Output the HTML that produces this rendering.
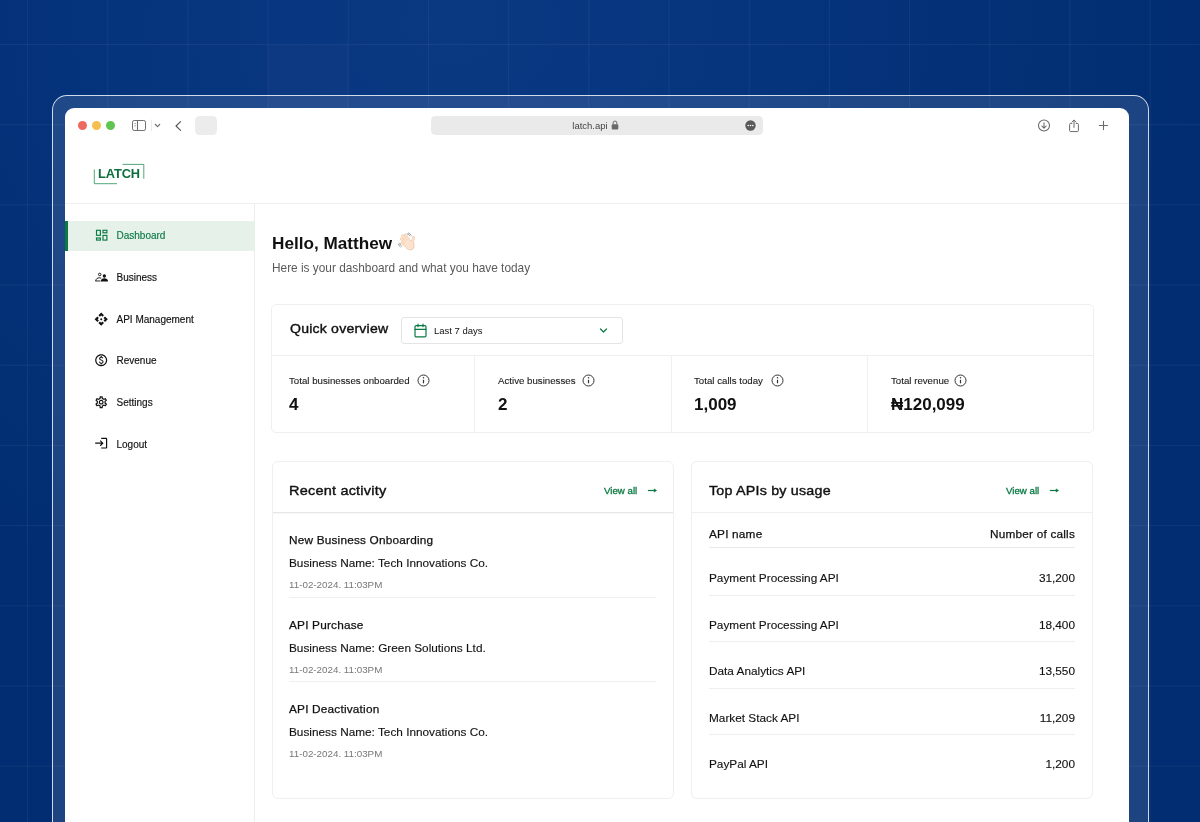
<!DOCTYPE html>
<html lang="en">
<head>
<meta charset="utf-8">
<title>Latch Dashboard</title>
<style>
*{box-sizing:border-box;margin:0;padding:0}
html,body{width:1200px;height:822px;overflow:hidden}
body{font-family:"Liberation Sans",Arial,Helvetica,sans-serif;color:#111;position:relative;
background:#022d72 radial-gradient(ellipse 62% 76% at 37.5% 3%,#0a3881 0%,#083680 22%,#05347c 46%,#043077 68%,#022e73 92%,#022d72 100%);}
.grid{position:absolute;left:0;top:0;width:1200px;height:822px;
background-image:linear-gradient(to right,rgba(255,255,255,.05) 1px,transparent 1px),linear-gradient(to bottom,rgba(255,255,255,.05) 1px,transparent 1px);
background-size:80.2px 80.2px;background-position:27px 44px;}
.cell{position:absolute;left:268px;top:45px;width:80px;height:80px;background:rgba(255,255,255,.018)}
.frame{position:absolute;left:52px;top:95px;width:1097px;height:760px;border:1px solid rgba(255,255,255,.8);border-radius:15px;background:rgba(255,255,255,.11);}
.win{will-change:transform;position:absolute;left:65px;top:108px;width:1064px;height:740px;background:#fff;border-radius:9px 9px 0 0;overflow:hidden;}
.abs{position:absolute}
.tl{position:absolute;top:13px;width:9px;height:9px;border-radius:50%}
.hdrline{position:absolute;left:0;top:95px;width:1064px;height:1px;background:#eef0ef}
.side{position:absolute;left:0;top:96px;width:190px;height:700px;border-right:1px solid #e9f0ec}
.nav{position:absolute;left:0;width:189px;height:30px;font-size:10px;color:#111;}
.nav span{-webkit-text-stroke:.15px currentColor;position:absolute;left:51.5px;top:9px;line-height:12px;white-space:nowrap}
.nav svg{position:absolute;left:29.1px;top:7px;width:14.4px;height:14.4px}
.nav.on{color:#0b7a43}
.navbg{position:absolute;left:0;top:113px;width:189.5px;height:29.6px;background:#e6f1ea}
.navbg:before{content:"";position:absolute;left:0;top:0;width:3.4px;height:29.6px;background:#0a7a42}
.card{position:absolute;background:#fff;border:1px solid #eeefef;border-radius:6px}
.t{position:absolute;white-space:nowrap;line-height:1}
.h2{font-size:13.6px;color:#111;letter-spacing:.2px;-webkit-text-stroke:.4px #111;transform:scaleX(1.05);transform-origin:0 50%}
.lbl{font-size:9.7px;color:#1c1c1c;-webkit-text-stroke:.12px #1c1c1c}
.val{font-size:17px;font-weight:700;color:#111}
.green{color:#0a7a42;-webkit-text-stroke:.3px #0a7a42}
.ln{position:absolute;height:1px;background:#efefef}
.vl{position:absolute;width:1px;background:#f0f0f0}
.m{font-size:11.8px;color:#111;-webkit-text-stroke:.12px #111}
.ms{-webkit-text-stroke:.25px #111;letter-spacing:.2px}
.d{font-size:9.8px;color:#777}
.r{text-align:right}
</style>
</head>
<body>
<div class="grid"></div><div class="cell"></div>
<div class="frame"></div>
<div class="win">
  <!-- browser chrome -->
  <div class="tl" style="left:13.3px;background:#ec6a5e"></div>
  <div class="tl" style="left:27.2px;background:#f4bf4f"></div>
  <div class="tl" style="left:40.8px;background:#61c554"></div>
  <svg class="abs" style="left:66px;top:11px" width="30" height="14" viewBox="0 0 30 14" fill="none" stroke="#707070" stroke-width="1">
    <rect x="1.5" y="1.5" width="13" height="10" rx="1.7"/><path d="M6.500 1.500v10" stroke-width="1.100"/><path d="M3.400 4.500h1.400M3.400 6.800h1.400" stroke-width=".8"/>
    <path d="M20.500 .5v12" stroke="#ececec" stroke-width="1"/>
    <path d="M24.300 5.400l2.200 2.200 2.200-2.200" stroke-width="1.200" stroke="#666" stroke-linecap="round" stroke-linejoin="round"/>
  </svg>
  <svg class="abs" style="left:108px;top:11px" width="10" height="14" viewBox="0 0 10 14" fill="none" stroke="#555" stroke-width="1.100" stroke-linecap="round" stroke-linejoin="round"><path d="M7.600 2.700L3 7l4.600 4.300"/></svg>
  <div class="abs" style="left:129.8px;top:8px;width:22.2px;height:19.4px;border-radius:4.5px;background:#ececec"></div>
  <div class="abs" style="left:366px;top:8px;width:332px;height:19px;border-radius:4.5px;background:#eaeaea"></div>
  <div class="t" style="left:507.3px;top:12px;font-size:9.5px;color:#444;line-height:11px">latch.api</div>
  <svg class="abs" style="left:546.1px;top:12px" width="8" height="10" viewBox="0 0 8 10"><rect x=".7" y="4.2" width="6.6" height="5.2" rx="1" fill="#6a6a6a"/><path d="M2.1 4.5V3a1.9 1.9 0 013.8 0v1.5" fill="none" stroke="#6a6a6a" stroke-width="1"/></svg>
  <svg class="abs" style="left:679.5px;top:12px" width="11" height="11" viewBox="0 0 11 11"><circle cx="5.5" cy="5.5" r="5.2" fill="#5a5a5a"/><circle cx="3.2" cy="5.5" r=".8" fill="#fff"/><circle cx="5.5" cy="5.5" r=".8" fill="#fff"/><circle cx="7.8" cy="5.5" r=".8" fill="#fff"/></svg>
  <svg class="abs" style="left:971.7px;top:11px" width="14" height="14" viewBox="0 0 14 14" fill="none" stroke="#666" stroke-width="1.05" stroke-linecap="round" stroke-linejoin="round"><circle cx="7" cy="6.5" r="5.5"/><path d="M7 3.8v5.2M4.8 7L7 9.2 9.2 7"/></svg>
  <svg class="abs" style="left:1002.6px;top:9.5px" width="12" height="16" viewBox="0 0 12 16" fill="none" stroke="#6b6b6b" stroke-width="1" stroke-linecap="round" stroke-linejoin="round"><path d="M3.9 5.4H2.8A1.2 1.2 0 001.6 6.6v5.8a1.2 1.2 0 001.2 1.2h6.4a1.2 1.2 0 001.2-1.2V6.6a1.2 1.2 0 00-1.2-1.2H8.1"/><path d="M6 9.4V2.2M4 4l2-2 2 2"/></svg>
  <svg class="abs" style="left:1033.4px;top:12.1px" width="11" height="11" viewBox="0 0 11 11" fill="none" stroke="#6b6b6b" stroke-width="1.1" stroke-linecap="round"><path d="M5.500 1.400v8.200M1.400 5.500h8.200"/></svg>

  <!-- logo -->
  <div class="t" style="left:33px;top:59px;font-size:12.8px;font-weight:700;color:#0b6e3c;letter-spacing:-.1px;line-height:13px">LATCH</div>
  <svg class="abs" style="left:28px;top:55px" width="52" height="22" viewBox="0 0 52 22" fill="none" stroke="#258f57" stroke-width=".8"><path d="M29.5 1.4h21.3v14.3"/><path d="M1.3 6.5v14.2h22.7"/></svg>
  <div class="hdrline"></div>

  <!-- sidebar -->
  <div class="side"></div>
  <div class="navbg"></div>
  <div class="nav on" style="top:113px"><svg style="top:7.35px" viewBox="0 0 14.4 14.4" fill="none" stroke="#0b7a43" stroke-width="1.15"><rect x="2.5" y="2.3" width="3.9" height="5"/><rect x="9" y="2.3" width="3.9" height="2.5"/><rect x="2.5" y="10" width="3.9" height="2.1"/><rect x="9" y="7.4" width="3.9" height="4.7"/></svg><span>Dashboard</span></div>
  <div class="nav" style="top:155px"><svg style="top:6.85px" viewBox="0 0 24 24"><circle cx="9.6" cy="7.4" r="2.1" fill="none" stroke="#111" stroke-width="1.6"/><path d="M2.9 18.2c.3-3.4 2.800-5.200 6.400-5.200 1.100 0 2 .2 2.800.5" fill="none" stroke="#111" stroke-width="1.6"/><path d="M2.100 18.300h8.500" stroke="#111" stroke-width="1.5"/><circle cx="17.3" cy="10" r="2.8" fill="#111"/><path d="M11.200 19c.2-3.500 2.800-5.300 6.100-5.300s5.900 1.800 6.100 5.300z" fill="#111"/></svg><span>Business</span></div>
  <div class="nav" style="top:197px"><svg style="top:6.7px" viewBox="0 0 24 24" fill="#111"><path d="M14 12l-2 2-2-2 2-2 2 2zm-2-6l2.120 2.120 2.500-2.500L12 1 7.380 5.620l2.500 2.500L12 6zm-6 6l2.120-2.120-2.500-2.500L1 12l4.620 4.620 2.500-2.500L6 12zm12 0l-2.120 2.120 2.500 2.500L23 12l-4.620-4.620-2.500 2.500L18 12zm-6 6l-2.120-2.120-2.500 2.500L12 23l4.620-4.620-2.500-2.500L12 18z"/></svg><span>API Management</span></div>
  <div class="nav" style="top:238px"><svg style="top:7.1px" viewBox="0 0 24 24" fill="#111"><path d="M12 2C6.480 2 2 6.480 2 12s4.480 10 10 10 10-4.480 10-10S17.520 2 12 2zm0 18c-4.410 0-8-3.590-8-8s3.590-8 8-8 8 3.590 8 8-3.590 8-8 8zm.890-8.900c-1.780-.590-2.640-.960-2.640-1.900 0-1.020 1.110-1.390 1.810-1.390 1.310 0 1.790.990 1.900 1.340l1.580-.670c-.150-.440-.820-1.910-2.660-2.230V5h-1.750v1.260c-2.600.560-2.620 2.850-2.620 2.960 0 2.270 2.250 2.910 3.350 3.310 1.580.560 2.280 1.070 2.280 2.030 0 1.130-1.050 1.610-1.980 1.610-1.820 0-2.340-1.870-2.400-2.090l-1.660.670c.630 2.190 2.280 2.780 3.020 2.960V19h1.750v-1.240c.520-.090 3.020-.590 3.020-3.220.010-1.390-.600-2.610-3-3.440z"/></svg><span>Revenue</span></div>
  <div class="nav" style="top:280px"><svg style="top:6.7px" viewBox="0 0 24 24" fill="#111"><path d="M19.430 12.980c.040-.320.070-.640.070-.980 0-.340-.030-.660-.070-.980l2.110-1.650c.190-.150.240-.420.120-.640l-2-3.460c-.090-.160-.260-.250-.440-.250-.060 0-.120.010-.170.030l-2.490 1c-.520-.400-1.080-.730-1.690-.980l-.380-2.650C14.460 2.180 14.250 2 14 2h-4c-.250 0-.460.180-.490.420l-.380 2.650c-.610.250-1.170.590-1.690.980l-2.490-1c-.060-.020-.120-.030-.180-.030-.170 0-.340.090-.430.250l-2 3.460c-.130.220-.070.490.120.640l2.110 1.650c-.040.320-.070.650-.070.980 0 .330.030.660.070.980l-2.110 1.650c-.190.150-.240.420-.120.640l2 3.460c.090.160.260.250.440.250.060 0 .120-.010.170-.030l2.490-1c.520.400 1.080.730 1.690.980l.380 2.650c.030.240.240.420.490.420h4c.250 0 .460-.180.490-.420l.380-2.650c.610-.250 1.170-.590 1.690-.980l2.490 1c.060.020.120.030.180.030.170 0 .340-.090.430-.250l2-3.460c.120-.220.070-.490-.120-.640l-2.110-1.650zm-1.980-1.710c.040.310.050.520.050.730 0 .210-.020.430-.050.730l-.140 1.130.890.700 1.080.840-.700 1.210-1.270-.510-1.040-.420-.900.680c-.430.320-.840.560-1.250.730l-1.060.430-.160 1.130-.200 1.350h-1.400l-.190-1.350-.160-1.130-1.060-.430c-.430-.180-.830-.410-1.230-.710l-.910-.700-1.060.430-1.270.510-.700-1.210 1.080-.840.890-.700-.140-1.130c-.030-.310-.050-.540-.050-.740s.020-.430.050-.730l.140-1.130-.890-.700-1.080-.840.700-1.210 1.270.510 1.040.420.900-.680c.430-.320.840-.560 1.250-.730l1.060-.430.160-1.130.200-1.350h1.390l.190 1.350.160 1.130 1.060.430c.430.180.830.410 1.230.710l.910.700 1.060-.430 1.270-.510.700 1.210-1.070.850-.890.700.140 1.130zM12 8c-2.210 0-4 1.790-4 4s1.790 4 4 4 4-1.790 4-4-1.790-4-4-4zm0 6c-1.100 0-2-.900-2-2s.900-2 2-2 2 .900 2 2-.900 2-2 2z"/></svg><span>Settings</span></div>
  <div class="nav" style="top:322px"><svg style="top:6.15px" viewBox="0 0 24 24" fill="#111"><path d="M11 7L9.600 8.400l2.600 2.600H2v2h10.200l-2.600 2.600L11 17l5-5-5-5zm9 12h-8v2h8c1.100 0 2-.900 2-2V5c0-1.100-.900-2-2-2h-8v2h8v14z"/></svg><span>Logout</span></div>

  <!-- greeting -->
  <div class="t" style="left:207px;top:126px;font-size:17.15px;font-weight:700;color:#111;line-height:18px">Hello, Matthew</div>
  <svg class="abs" role="img" aria-label="👋 waving hand" style="left:327px;top:118px" width="30" height="30" viewBox="0 0 30 30" fill="none" stroke-linecap="round">
<g stroke="#efc4a4"><path d="M16.8 14.4L13.3 9.100" stroke-width="2.9"/><path d="M15.300 15.600L10.700 9.800" stroke-width="2.9"/><path d="M13.900 17.200L9.300 13" stroke-width="2.8"/><path d="M13.400 19.400L9.700 16.800" stroke-width="2.500"/><path d="M20.600 15.800L21.500 11.400" stroke-width="2.700"/><ellipse cx="17.500" cy="19" rx="4.400" ry="5.400" transform="rotate(-38 17.300 19)" fill="#efc4a4" stroke-width=".6"/></g>
<g stroke="#fbe0ca"><path d="M16.8 14.4L13.3 9.100" stroke-width="2.100"/><path d="M15.300 15.600L10.700 9.800" stroke-width="2.100"/><path d="M13.900 17.200L9.300 13" stroke-width="2"/><path d="M13.400 19.400L9.700 16.800" stroke-width="1.700"/><path d="M20.600 15.800L21.500 11.400" stroke-width="1.900"/><ellipse cx="17.200" cy="18.800" rx="4.100" ry="5.100" transform="rotate(-38 17.200 18.800)" fill="#fce3cf" stroke="none"/></g>
<g stroke="#7d7d7d" stroke-width=".75"><path d="M15.300 7.800q1.600.4 2.600 2M16.500 6.900q1.800.6 2.700 2.400"/><path d="M6.300 18q.4 1.800 2 2.900M7.600 17.300q.5 1.900 2.200 3.100"/></g>
</svg>
  <div class="t" style="left:207px;top:154px;font-size:11.85px;color:#5a5a5a;line-height:13px">Here is your dashboard and what you have today</div>

  <!-- quick overview -->
  <div class="card" style="left:206px;top:196px;width:823px;height:129px;border-radius:5px"></div>
  <div class="t h2" style="left:224.7px;top:213px;line-height:15px;transform:scaleX(1.035)">Quick overview</div>
  <div class="abs" style="left:336px;top:209px;width:222px;height:27px;border:1px solid #e4e4e4;border-radius:3px"></div>
  <svg class="abs" style="left:349px;top:215px" width="13" height="15" viewBox="0 0 13 15" fill="none" stroke="#0a7a42" stroke-width="1.2" stroke-linecap="round"><rect x="1" y="2.6" width="11" height="11.2" rx="1.1"/><path d="M1 6.300h11M4 1.200v2.500M9 1.200v2.500"/></svg>
  <div class="t" style="left:369px;top:217px;font-size:9.5px;color:#111;line-height:11px">Last 7 days</div>
  <svg class="abs" style="left:534px;top:219px" width="9" height="7" viewBox="0 0 9 7" fill="none" stroke="#0a7a42" stroke-width="1.2" stroke-linecap="round" stroke-linejoin="round"><path d="M1.5 2l3 3 3-3"/></svg>
  <div class="ln" style="left:207px;top:247px;width:821px"></div>
  <div class="vl" style="left:409px;top:248px;height:76px"></div>
  <div class="vl" style="left:605.6px;top:248px;height:76px"></div>
  <div class="vl" style="left:802px;top:248px;height:76px"></div>

  <div class="t lbl" style="left:224px;top:268px;line-height:10px">Total businesses onboarded</div>
  <div class="t val" style="left:224px;top:288px;line-height:18px">4</div>
  <div class="t lbl" style="left:433px;top:268px;line-height:10px">Active businesses</div>
  <div class="t val" style="left:433px;top:288px;line-height:18px">2</div>
  <div class="t lbl" style="left:629px;top:268px;line-height:10px">Total calls today</div>
  <div class="t val" style="left:629px;top:288px;line-height:18px">1,009</div>
  <div class="t lbl" style="left:826px;top:268px;line-height:10px">Total revenue</div>
  <div class="t val" style="left:826px;top:288px;line-height:18px">₦120,099</div>
  <svg class="abs info" style="left:352px;top:266.4px" width="13" height="13" viewBox="0 0 13 13"><use href="#inf"/></svg>
  <svg class="abs info" style="left:517px;top:266.4px" width="13" height="13" viewBox="0 0 13 13"><use href="#inf"/></svg>
  <svg class="abs info" style="left:706px;top:266.4px" width="13" height="13" viewBox="0 0 13 13"><use href="#inf"/></svg>
  <svg class="abs info" style="left:889px;top:266.4px" width="13" height="13" viewBox="0 0 13 13"><use href="#inf"/></svg>
  <svg width="0" height="0" style="position:absolute"><defs><g id="inf" fill="none" stroke="#333" stroke-width="1"><circle cx="6.5" cy="6.5" r="5.500"/><path d="M6.500 5.800v3.500" stroke-width="1.200"/><circle cx="6.500" cy="3.800" r=".75" fill="#333" stroke="none"/></g></defs></svg>

  <!-- recent activity -->
  <div class="card" style="left:207px;top:353.4px;width:402px;height:337.3px"></div>
  <div class="t h2" style="left:223.8px;top:375px;line-height:15px;transform:scaleX(1.065)">Recent activity</div>
  <div class="t green" style="left:539px;top:377px;font-size:9.7px;line-height:11px">View all</div>
  <svg class="abs" style="left:581.8px;top:378px" width="11" height="9" viewBox="0 0 11 9" fill="none" stroke="#0a7a42" stroke-width="1.2" stroke-linejoin="round"><path d="M.9 4.500h7.300"/><path d="M7.200 2.900L9.600 4.500 7.200 6.100z" fill="#0a7a42" stroke-width=".6"/></svg>
  <div class="ln" style="left:208px;top:404px;width:400px;background:#e6e6e6;box-shadow:0 1px 1px rgba(0,0,0,.04)"></div>

  <div class="t m ms" style="left:224px;top:426px;line-height:13px">New Business Onboarding</div>
  <div class="t m" style="left:224px;top:449px;line-height:13px">Business Name: Tech Innovations Co.</div>
  <div class="t d" style="left:224px;top:472px;line-height:10px">11-02-2024. 11:03PM</div>
  <div class="ln" style="left:224px;top:489px;width:367px"></div>

  <div class="t m ms" style="left:224px;top:511px;line-height:13px">API Purchase</div>
  <div class="t m" style="left:224px;top:534px;line-height:13px">Business Name: Green Solutions Ltd.</div>
  <div class="t d" style="left:224px;top:556.5px;line-height:10px">11-02-2024. 11:03PM</div>
  <div class="ln" style="left:224px;top:573.4px;width:367px"></div>

  <div class="t m ms" style="left:224px;top:595px;line-height:13px">API Deactivation</div>
  <div class="t m" style="left:224px;top:618px;line-height:13px">Business Name: Tech Innovations Co.</div>
  <div class="t d" style="left:224px;top:641px;line-height:10px">11-02-2024. 11:03PM</div>

  <!-- top apis -->
  <div class="card" style="left:626px;top:353.4px;width:402px;height:337.3px"></div>
  <div class="t h2" style="left:644px;top:375px;line-height:15px">Top APIs by usage</div>
  <div class="t green" style="left:941px;top:377px;font-size:9.7px;line-height:11px">View all</div>
  <svg class="abs" style="left:983.9px;top:378px" width="11" height="9" viewBox="0 0 11 9" fill="none" stroke="#0a7a42" stroke-width="1.2" stroke-linejoin="round"><path d="M.9 4.500h7.300"/><path d="M7.200 2.900L9.600 4.500 7.200 6.100z" fill="#0a7a42" stroke-width=".6"/></svg>
  <div class="ln" style="left:627px;top:404px;width:400px"></div>

  <div class="t m ms" style="left:644px;top:420px;line-height:13px">API name</div>
  <div class="t m ms r" style="right:54px;top:420px;line-height:13px">Number of calls</div>
  <div class="ln" style="left:644px;top:439px;width:366px;background:#e8e8e8"></div>

  <div class="t m" style="left:644px;top:464px;line-height:13px">Payment Processing API</div>
  <div class="t m r" style="right:54px;top:464px;line-height:13px">31,200</div>
  <div class="ln" style="left:644px;top:487px;width:366px"></div>
  <div class="t m" style="left:644px;top:511px;line-height:13px">Payment Processing API</div>
  <div class="t m r" style="right:54px;top:511px;line-height:13px">18,400</div>
  <div class="ln" style="left:644px;top:533px;width:366px"></div>
  <div class="t m" style="left:644px;top:557px;line-height:13px">Data Analytics API</div>
  <div class="t m r" style="right:54px;top:557px;line-height:13px">13,550</div>
  <div class="ln" style="left:644px;top:580px;width:366px"></div>
  <div class="t m" style="left:644px;top:604px;line-height:13px">Market Stack API</div>
  <div class="t m r" style="right:54px;top:604px;line-height:13px">11,209</div>
  <div class="ln" style="left:644px;top:626px;width:366px"></div>
  <div class="t m" style="left:644px;top:650px;line-height:13px">PayPal API</div>
  <div class="t m r" style="right:54px;top:650px;line-height:13px">1,200</div>
</div>
</body>
</html>
